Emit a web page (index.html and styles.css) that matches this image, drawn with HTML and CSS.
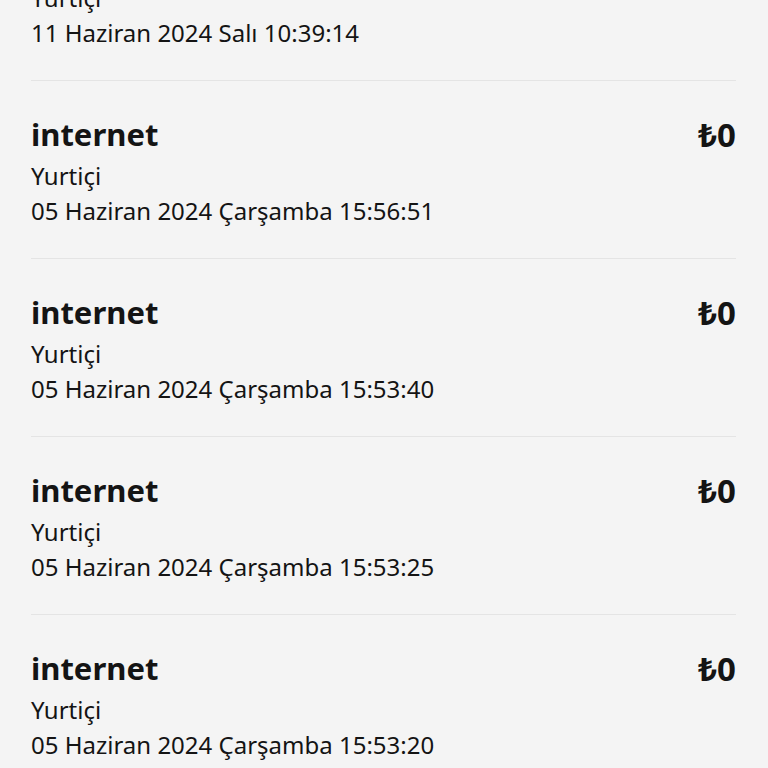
FILE: index.html
```html
<!DOCTYPE html>
<html lang="tr">
<head>
    <meta charset="UTF-8">
    <meta name="viewport" content="width=device-width, initial-scale=1.0">
    <title>Kullanım Geçmişi</title>
    <link rel="stylesheet" href="styles.css">
</head>
<body>

    <div class="history">
        <div class="item">
            <div class="item-info">
                <div class="item-title">internet</div>
                <div class="item-sub">Yurtiçi</div>
                <div class="item-sub">11 Haziran 2024 Salı 10:39:14</div>
            </div>
            <div class="item-amount">₺0</div>
        </div>

        <div class="item">
            <div class="item-info">
                <div class="item-title">internet</div>
                <div class="item-sub">Yurtiçi</div>
                <div class="item-sub">05 Haziran 2024 Çarşamba 15:56:51</div>
            </div>
            <div class="item-amount">₺0</div>
        </div>

        <div class="item">
            <div class="item-info">
                <div class="item-title">internet</div>
                <div class="item-sub">Yurtiçi</div>
                <div class="item-sub">05 Haziran 2024 Çarşamba 15:53:40</div>
            </div>
            <div class="item-amount">₺0</div>
        </div>

        <div class="item">
            <div class="item-info">
                <div class="item-title">internet</div>
                <div class="item-sub">Yurtiçi</div>
                <div class="item-sub">05 Haziran 2024 Çarşamba 15:53:25</div>
            </div>
            <div class="item-amount">₺0</div>
        </div>

        <div class="item">
            <div class="item-info">
                <div class="item-title">internet</div>
                <div class="item-sub">Yurtiçi</div>
                <div class="item-sub">05 Haziran 2024 Çarşamba 15:53:20</div>
            </div>
            <div class="item-amount">₺0</div>
        </div>
    </div>

</body>
</html>
```

FILE: styles.css
```css
body {
    font-family: "Noto Sans", "DejaVu Sans", sans-serif;
    margin: 0;
    padding: 0;
    background: #f4f4f4;
    color: #141414;
    overflow: hidden;
}
.history {
    margin: -97px 32px 0 31px;
}
.item {
    display: flex;
    justify-content: space-between;
    align-items: flex-start;
    padding: 30px 0 30px;
    border-bottom: 1px solid #e4e4e4;
}
.item-title {
    font-size: 31px;
    font-weight: 700;
    line-height: 47px;
}
.item-sub {
    font-size: 24px;
    line-height: 35px;
}
.item-amount {
    font-size: 33px;
    font-weight: 700;
    line-height: 47px;
}
```
